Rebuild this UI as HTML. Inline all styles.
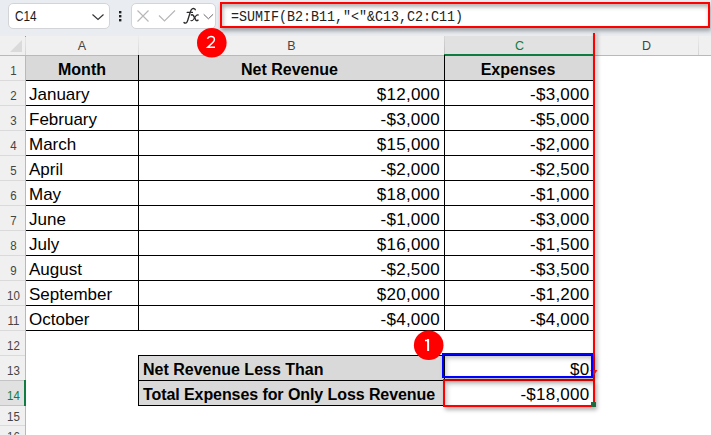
<!DOCTYPE html>
<html><head><meta charset="utf-8">
<style>
*{box-sizing:border-box;margin:0;padding:0}
html,body{width:711px;height:435px;overflow:hidden;background:#fff;font-family:"Liberation Sans",sans-serif}
.a{position:absolute}
#tb{left:0;top:0;width:711px;height:36px;background:#e9edf2}
.box{background:#fff;border:1px solid #d2d4d8;border-radius:5px}
#hdr{left:0;top:36px;width:711px;height:20px;background:#f0f0f0}
#rh{left:0;top:36px;width:26px;height:399px;background:#f0f0f0}
.hl{font-size:12.5px;color:#444;line-height:20px;text-align:center;top:36px;height:19px}
.rn{font-size:12.5px;color:#444;line-height:25px;text-align:center;left:0.5px;width:25px;transform:scaleX(0.92)}
.vs{width:1px;background:#d8d8d8}
.hs{height:1px;background:#dadada;left:0;width:25px}
.t{font-size:16px;line-height:25px;color:#000;white-space:nowrap}
.b{font-weight:bold}
.r{font-size:17px}
.n{font-size:17px;letter-spacing:0.25px;line-height:25px;color:#000;text-align:right;white-space:nowrap}
.bk{background:#000}
</style></head><body>
<!-- toolbar -->
<div class="a" id="tb"></div>
<div class="a box" style="left:8px;top:3px;width:102px;height:26px"></div>
<div class="a" style="left:15px;top:3.5px;font-size:14.2px;line-height:25px;color:#1a1a1a;transform:scaleX(0.83);transform-origin:0 0">C14</div>
<svg class="a" style="left:0;top:0" width="711" height="36">
  <polyline points="92.5,14.5 98,19.5 103.5,14.5" fill="none" stroke="#333" stroke-width="1.15"/>
  <rect x="119" y="11" width="2.4" height="2.4" fill="#222"/>
  <rect x="119" y="15" width="2.4" height="2.4" fill="#222"/>
  <rect x="119" y="19" width="2.4" height="2.4" fill="#222"/>
</svg>
<div class="a box" style="left:131px;top:3px;width:85px;height:26px"></div>
<svg class="a" style="left:0;top:0" width="711" height="36">
  <path d="M137.5 10.5 L148.5 21.5 M148.5 10.5 L137.5 21.5" stroke="#b8b8b8" stroke-width="1.2" fill="none"/>
  <path d="M159 15.5 L164.5 21 L175 10.5" stroke="#b8b8b8" stroke-width="1.2" fill="none"/>
  <polyline points="203.7,14.3 208.4,18.8 213.1,14.3" fill="none" stroke="#666" stroke-width="1"/>
</svg>
<svg class="a" style="left:0;top:0" width="711" height="36"><g fill="none" stroke="#2b2b2b" stroke-linecap="round">
<path d="M195.3 9.7 C194.8 8.5 193.3 8.1 192.3 8.8 C191.3 9.5 190.6 10.8 190.1 12.6 L187.9 19.8 C187.4 21.7 186.6 23 185.4 23.1 C184.7 23.1 184.3 22.9 184 22.5" stroke-width="1.35"/>
<path d="M187.1 12.4 L192.5 12.4" stroke-width="1.1"/>
<path d="M191.3 15.0 C192.3 14.5 193.1 14.9 193.6 15.9 L195.7 19.9 C196.2 20.8 197 20.9 198 20.2" stroke-width="1.45"/>
<path d="M198.4 15.0 C197.5 14.6 196.7 15.0 195.9 15.9 L193.2 19.7 C192.5 20.6 191.8 21.0 190.9 20.6" stroke-width="1.05"/>
</g></svg>
<div class="a" style="left:220px;top:2px;width:490px;height:26px;border:2px solid #f00;background:#fff;box-shadow:1px 3px 4px rgba(0,0,0,0.32), inset 1px 3px 4px rgba(0,0,0,0.3)"></div>
<div class="a" style="left:231px;top:8px;font-family:'Liberation Mono',monospace;font-size:15px;line-height:20px;color:#222;transform:scaleX(0.889);transform-origin:0 0">=SUMIF(B2:B11,"&lt;"&amp;C13,C2:C11)</div>

<!-- headers -->
<div class="a" id="hdr"></div>
<div class="a" id="rh"></div>
<div class="a" style="left:444px;top:36px;width:150px;height:19px;background:#e1e1e1"></div>
<div class="a" style="left:0;top:381px;width:25px;height:24px;background:#e1e1e1"></div>
<svg class="a" style="left:0;top:36px" width="30" height="20"><polygon points="22,4 22,16 10,16" fill="#dadada"/></svg>
<div class="a" style="left:0;top:55px;width:711px;height:1px;background:#b9b9b9"></div>
<div class="a" style="left:25px;top:36px;width:1px;height:19px;background:linear-gradient(#e6e6e6,#d4d4d4)"></div>
<div class="a" style="left:25px;top:36px;width:1px;height:1px;background:#999"></div>
<div class="a" style="left:25px;top:55px;width:1px;height:380px;background:#b9b9b9"></div>
<div class="a vs" style="left:138px;top:36px;height:19px;background:linear-gradient(#ececec,#d6d6d6)"></div>
<div class="a vs" style="left:698px;top:36px;height:19px;background:linear-gradient(#ececec,#d6d6d6)"></div>
<div class="a vs" style="left:444px;top:36px;height:19px;background:linear-gradient(#d8d8d8,#bdbdbd)"></div>
<div class="a vs" style="left:594px;top:36px;height:19px;background:linear-gradient(#d8d8d8,#bdbdbd)"></div>
<div class="a" style="left:444px;top:54px;width:151px;height:2px;background:#107c41"></div>
<div class="a hl" style="left:26px;width:112px">A</div>
<div class="a hl" style="left:139px;width:305px">B</div>
<div class="a hl" style="left:445px;width:149px;color:#107c41">C</div>
<div class="a hl" style="left:595px;width:103px">D</div>
<div class="a rn" style="top:59px;height:25px;line-height:25px;color:#444">1</div>
<div class="a hs" style="top:80px"></div>
<div class="a rn" style="top:84px;height:25px;line-height:25px;color:#444">2</div>
<div class="a hs" style="top:105px"></div>
<div class="a rn" style="top:109px;height:25px;line-height:25px;color:#444">3</div>
<div class="a hs" style="top:130px"></div>
<div class="a rn" style="top:134px;height:25px;line-height:25px;color:#444">4</div>
<div class="a hs" style="top:155px"></div>
<div class="a rn" style="top:159px;height:25px;line-height:25px;color:#444">5</div>
<div class="a hs" style="top:180px"></div>
<div class="a rn" style="top:184px;height:25px;line-height:25px;color:#444">6</div>
<div class="a hs" style="top:205px"></div>
<div class="a rn" style="top:209px;height:25px;line-height:25px;color:#444">7</div>
<div class="a hs" style="top:230px"></div>
<div class="a rn" style="top:234px;height:25px;line-height:25px;color:#444">8</div>
<div class="a hs" style="top:255px"></div>
<div class="a rn" style="top:259px;height:25px;line-height:25px;color:#444">9</div>
<div class="a hs" style="top:280px"></div>
<div class="a rn" style="top:284px;height:25px;line-height:25px;color:#444">10</div>
<div class="a hs" style="top:305px"></div>
<div class="a rn" style="top:309px;height:25px;line-height:25px;color:#444">11</div>
<div class="a hs" style="top:330px"></div>
<div class="a rn" style="top:334px;height:25px;line-height:25px;color:#444">12</div>
<div class="a hs" style="top:355px"></div>
<div class="a rn" style="top:359px;height:25px;line-height:25px;color:#444">13</div>
<div class="a hs" style="top:380px;background:#c4c4c4"></div>
<div class="a rn" style="top:384px;height:25px;line-height:25px;color:#107c41">14</div>
<div class="a hs" style="top:405px;background:#c4c4c4"></div>
<div class="a rn" style="top:407px;height:20px;line-height:20px;color:#444">15</div>
<div class="a hs" style="top:425px"></div>
<div class="a rn" style="top:427px;height:20px;line-height:20px;color:#444">16</div>
<div class="a" style="left:24px;top:380px;width:2px;height:26px;background:#107c41"></div>
<div class="a" style="left:26px;top:56px;width:568px;height:24px;background:#d9d9d9"></div>
<div class="a" style="left:139px;top:356px;width:305px;height:49px;background:#d9d9d9"></div>
<div class="a bk" style="left:26px;top:80px;width:568px;height:1px"></div>
<div class="a bk" style="left:26px;top:105px;width:568px;height:1px"></div>
<div class="a bk" style="left:26px;top:130px;width:568px;height:1px"></div>
<div class="a bk" style="left:26px;top:155px;width:568px;height:1px"></div>
<div class="a bk" style="left:26px;top:180px;width:568px;height:1px"></div>
<div class="a bk" style="left:26px;top:205px;width:568px;height:1px"></div>
<div class="a bk" style="left:26px;top:230px;width:568px;height:1px"></div>
<div class="a bk" style="left:26px;top:255px;width:568px;height:1px"></div>
<div class="a bk" style="left:26px;top:280px;width:568px;height:1px"></div>
<div class="a bk" style="left:26px;top:305px;width:568px;height:1px"></div>
<div class="a bk" style="left:26px;top:330px;width:568px;height:1px"></div>
<div class="a bk" style="left:138px;top:55px;width:1px;height:276px"></div>
<div class="a bk" style="left:444px;top:55px;width:1px;height:276px"></div>
<div class="a bk" style="left:593px;top:55px;width:1px;height:276px"></div>
<div class="a bk" style="left:138px;top:355px;width:456px;height:1px"></div>
<div class="a bk" style="left:138px;top:380px;width:456px;height:1px"></div>
<div class="a bk" style="left:138px;top:405px;width:456px;height:1px"></div>
<div class="a bk" style="left:138px;top:355px;width:1px;height:51px"></div>
<div class="a bk" style="left:444px;top:355px;width:1px;height:51px"></div>
<div class="a bk" style="left:593px;top:355px;width:1px;height:51px"></div>
<div class="a t b" style="left:26px;width:112px;top:57px;text-align:center">Month</div>
<div class="a t b" style="left:137px;width:305px;top:57px;text-align:center">Net Revenue</div>
<div class="a t b" style="left:443px;width:150px;top:57px;text-align:center">Expenses</div>
<div class="a t r" style="left:29px;top:82px">January</div>
<div class="a n" style="left:139px;width:301px;top:82px">$12,000</div>
<div class="a n" style="left:445px;width:144.5px;top:82px">-$3,000</div>
<div class="a t r" style="left:29px;top:107px">February</div>
<div class="a n" style="left:139px;width:301px;top:107px">-$3,000</div>
<div class="a n" style="left:445px;width:144.5px;top:107px">-$5,000</div>
<div class="a t r" style="left:29px;top:132px">March</div>
<div class="a n" style="left:139px;width:301px;top:132px">$15,000</div>
<div class="a n" style="left:445px;width:144.5px;top:132px">-$2,000</div>
<div class="a t r" style="left:29px;top:157px">April</div>
<div class="a n" style="left:139px;width:301px;top:157px">-$2,000</div>
<div class="a n" style="left:445px;width:144.5px;top:157px">-$2,500</div>
<div class="a t r" style="left:29px;top:182px">May</div>
<div class="a n" style="left:139px;width:301px;top:182px">$18,000</div>
<div class="a n" style="left:445px;width:144.5px;top:182px">-$1,000</div>
<div class="a t r" style="left:29px;top:207px">June</div>
<div class="a n" style="left:139px;width:301px;top:207px">-$1,000</div>
<div class="a n" style="left:445px;width:144.5px;top:207px">-$3,000</div>
<div class="a t r" style="left:29px;top:232px">July</div>
<div class="a n" style="left:139px;width:301px;top:232px">$16,000</div>
<div class="a n" style="left:445px;width:144.5px;top:232px">-$1,500</div>
<div class="a t r" style="left:29px;top:257px">August</div>
<div class="a n" style="left:139px;width:301px;top:257px">-$2,500</div>
<div class="a n" style="left:445px;width:144.5px;top:257px">-$3,500</div>
<div class="a t r" style="left:29px;top:282px">September</div>
<div class="a n" style="left:139px;width:301px;top:282px">$20,000</div>
<div class="a n" style="left:445px;width:144.5px;top:282px">-$1,200</div>
<div class="a t r" style="left:29px;top:307px">October</div>
<div class="a n" style="left:139px;width:301px;top:307px">-$4,000</div>
<div class="a n" style="left:445px;width:144.5px;top:307px">-$4,000</div>
<div class="a t b" style="left:143px;top:357px">Net Revenue Less Than</div>
<div class="a t b" style="left:143px;top:382px"><span style="letter-spacing:-0.08px">Total Expenses for Only Loss Revenue</span></div>
<div class="a n" style="left:445px;width:144.5px;top:357px">$0</div>
<div class="a n" style="left:445px;width:144.5px;top:382px">-$18,000</div>
<div class="a" style="left:593px;top:33px;width:2px;height:347px;background:#f00;box-shadow:2px 0 4px rgba(0,0,0,0.4)"></div>
<svg class="a" style="left:585px;top:365px" width="16" height="14"><polygon points="5,5 12.5,5 9,10.5" fill="#f22"/></svg>
<div class="a" style="left:443px;top:379px;width:152px;height:28px;border:2px solid #f00;box-shadow:2px 3px 4px rgba(0,0,0,0.3), inset 2px 3px 5px rgba(0,0,0,0.22)"></div>
<div class="a" style="left:442px;top:353px;width:151px;height:25px;border:2px solid #00f;box-shadow:2px 3px 4px rgba(0,0,0,0.3), inset 2px 3px 5px rgba(0,0,0,0.25)"></div>
<div class="a" style="left:591px;top:402px;width:5px;height:5px;background:#1d6b3c"></div>
<svg class="a" style="left:0;top:0" width="711" height="435"><circle cx="211.8" cy="42.7" r="14.8" fill="#f00"/><path d="M207.4 38.8 C208.1 37.1 209.4 36.5 210.9 36.5 C213 36.5 214.4 37.7 214.4 39.4 C214.4 40.6 213.8 41.4 212.8 42.5 L207.7 47.2 L215 47.2" fill="none" stroke="#fff" stroke-width="1.5" stroke-linejoin="miter"/><circle cx="428.7" cy="345.3" r="14.8" fill="#f00"/><path d="M427.1 339 H429.1 V350.9 H427.1 Z M425 339.8 H427.5 V341.2 H425 Z" fill="#fff"/></svg>
</body></html>
